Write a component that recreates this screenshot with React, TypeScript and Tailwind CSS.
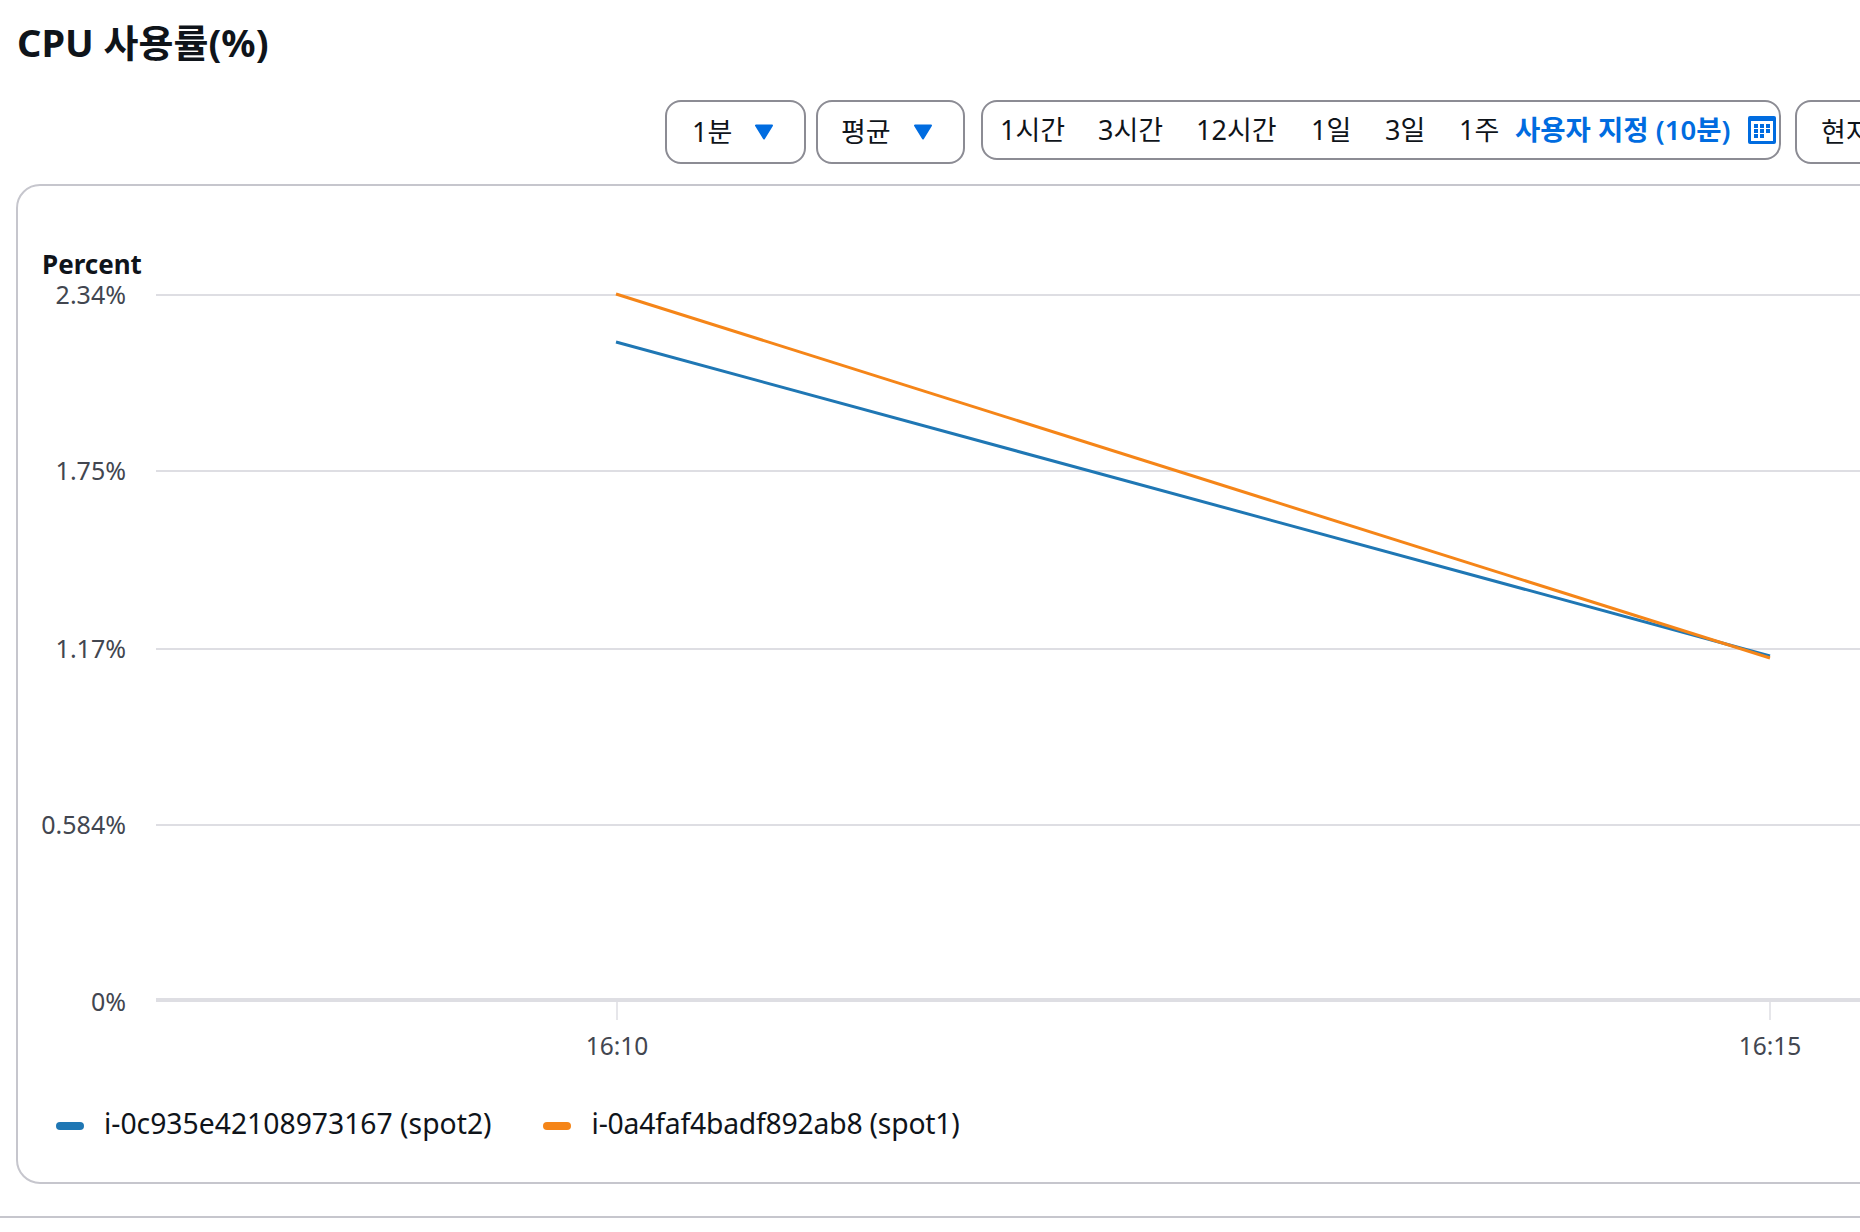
const font = "font-['Noto_Sans','Noto_Sans_CJK_KR',sans-serif]";

const yLabels = [
  { y: 295, text: "2.34%" },
  { y: 471, text: "1.75%" },
  { y: 649, text: "1.17%" },
  { y: 825, text: "0.584%" },
];

const calendarCells = [
  [6, 8], [12, 8], [18, 8],
  [6, 13], [12, 13], [18, 13],
  [6, 18], [12, 18],
];

function Caret() {
  return (
    <svg width="20" height="16" viewBox="0 0 20 16" className="shrink-0">
      <path d="M2 1.5h16L10 14.5z" fill="#006ce0" stroke="#006ce0" strokeWidth="2" strokeLinejoin="round" />
    </svg>
  );
}

function CalendarIcon() {
  return (
    <svg width="28" height="28" viewBox="0 0 28 28" className="block shrink-0">
      <rect width="28" height="28" rx="2" fill="#006ce0" />
      <rect x="3" y="5" width="22" height="20" fill="#fff" />
      {calendarCells.map(([x, y]) => (
        <rect key={`${x}-${y}`} x={x} y={y} width="4" height="4" fill="#006ce0" />
      ))}
    </svg>
  );
}

function Chart() {
  // drawn in page coordinates, then moved to where the svg sits in the panel
  const ox = 18;
  const oy = 270;
  return (
    <svg width="1900" height="800" className="block">
      <g transform={`translate(${-ox} ${-oy})`}>
        {yLabels.map((l) => (
          <g key={l.y}>
            <line x1="156" x2="1900" y1={l.y} y2={l.y} stroke="#dedee3" strokeWidth="2" />
            <text x="126" y={l.y + 9} textAnchor="end" fontSize="25" fill="#424650">
              {l.text}
            </text>
          </g>
        ))}
        <line x1="156" x2="1900" y1="1000" y2="1000" stroke="#dedee3" strokeWidth="4" />
        <text x="126" y="1011" textAnchor="end" fontSize="25" fill="#424650">
          0%
        </text>
        <line x1="617" x2="617" y1="1002" y2="1020" stroke="#dedee3" strokeWidth="1.5" />
        <line x1="1770" x2="1770" y1="1002" y2="1020" stroke="#dedee3" strokeWidth="1.5" />
        <text x="617" y="1055" textAnchor="middle" fontSize="24.5" fill="#424650">
          16:10
        </text>
        <text x="1770" y="1055" textAnchor="middle" fontSize="24.5" fill="#424650">
          16:15
        </text>
        <line x1="616" y1="342" x2="1770" y2="656" stroke="#1f77b4" strokeWidth="3" />
        <line x1="616" y1="294" x2="1770" y2="658" stroke="#f58518" strokeWidth="3" />
      </g>
    </svg>
  );
}

export default function App() {
  return (
    <div className={`${font} w-[1860px] h-[1232px] overflow-hidden bg-white text-[#0f141a]`}>
      <h2 className="pl-[17px] pt-[18px] pb-[1px] text-[38px] leading-[48px] font-bold whitespace-nowrap">CPU 사용률(%)</h2>

      <div className="flex items-start pl-[665px] pt-[33px] text-[27px] whitespace-nowrap w-[2100px]">
        <button className="flex items-center justify-between w-[141px] h-[64px] pl-[25px] pr-[30px] border-2 border-[#8c8c94] rounded-[16px]">
          1분 <Caret />
        </button>
        <button className="flex items-center justify-between w-[149px] h-[64px] ml-[10px] pl-[23px] pr-[30px] border-2 border-[#8c8c94] rounded-[16px]">
          평균 <Caret />
        </button>
        <div className="flex items-center w-[800px] h-[60px] ml-[16px] pl-[17px] pr-[3px] border-2 border-[#8c8c94] rounded-[16px]">
          <span className="w-[98px]">1시간</span>
          <span className="w-[98px]">3시간</span>
          <span className="w-[115px]">12시간</span>
          <span className="w-[74px]">1일</span>
          <span className="w-[74px]">3일</span>
          <span className="w-[56px]">1주</span>
          <span className="font-semibold text-[#006ce0] text-[27.5px]">사용자 지정 (10분)</span>
          <span className="ml-auto"><CalendarIcon /></span>
        </div>
        <button className="flex items-center h-[64px] ml-[14px] pl-[24px] pr-[24px] border-2 border-[#8c8c94] rounded-[16px]">
          현지 시간대
        </button>
      </div>

      <div className="mt-[20px] ml-[16px] w-[2100px] h-[1000px] border-2 border-[#c6c6cd] rounded-[24px] overflow-hidden">
        <div className="pl-[24px] pt-[60px] text-[26px] leading-[36px] font-bold">Percent</div>
        <div className="-mt-[12px]"><Chart /></div>
        <div className="flex items-center mt-[32px] pl-[38px] text-[28.3px] text-[#0f141a] whitespace-nowrap">
          <span className="w-[28px] h-[8px] rounded-full bg-[#1f77b4]" />
          <span className="ml-[20px] pb-[6px]">i-0c935e42108973167 (spot2)</span>
          <span className="w-[28px] h-[8px] ml-[51px] rounded-full bg-[#f58518]" />
          <span className="ml-[21px] pb-[6px] tracking-[-0.2px]">i-0a4faf4badf892ab8 (spot1)</span>
        </div>
      </div>

      <div className="mt-[32px] h-[2px] bg-[#c6c6cd]" />
    </div>
  );
}
